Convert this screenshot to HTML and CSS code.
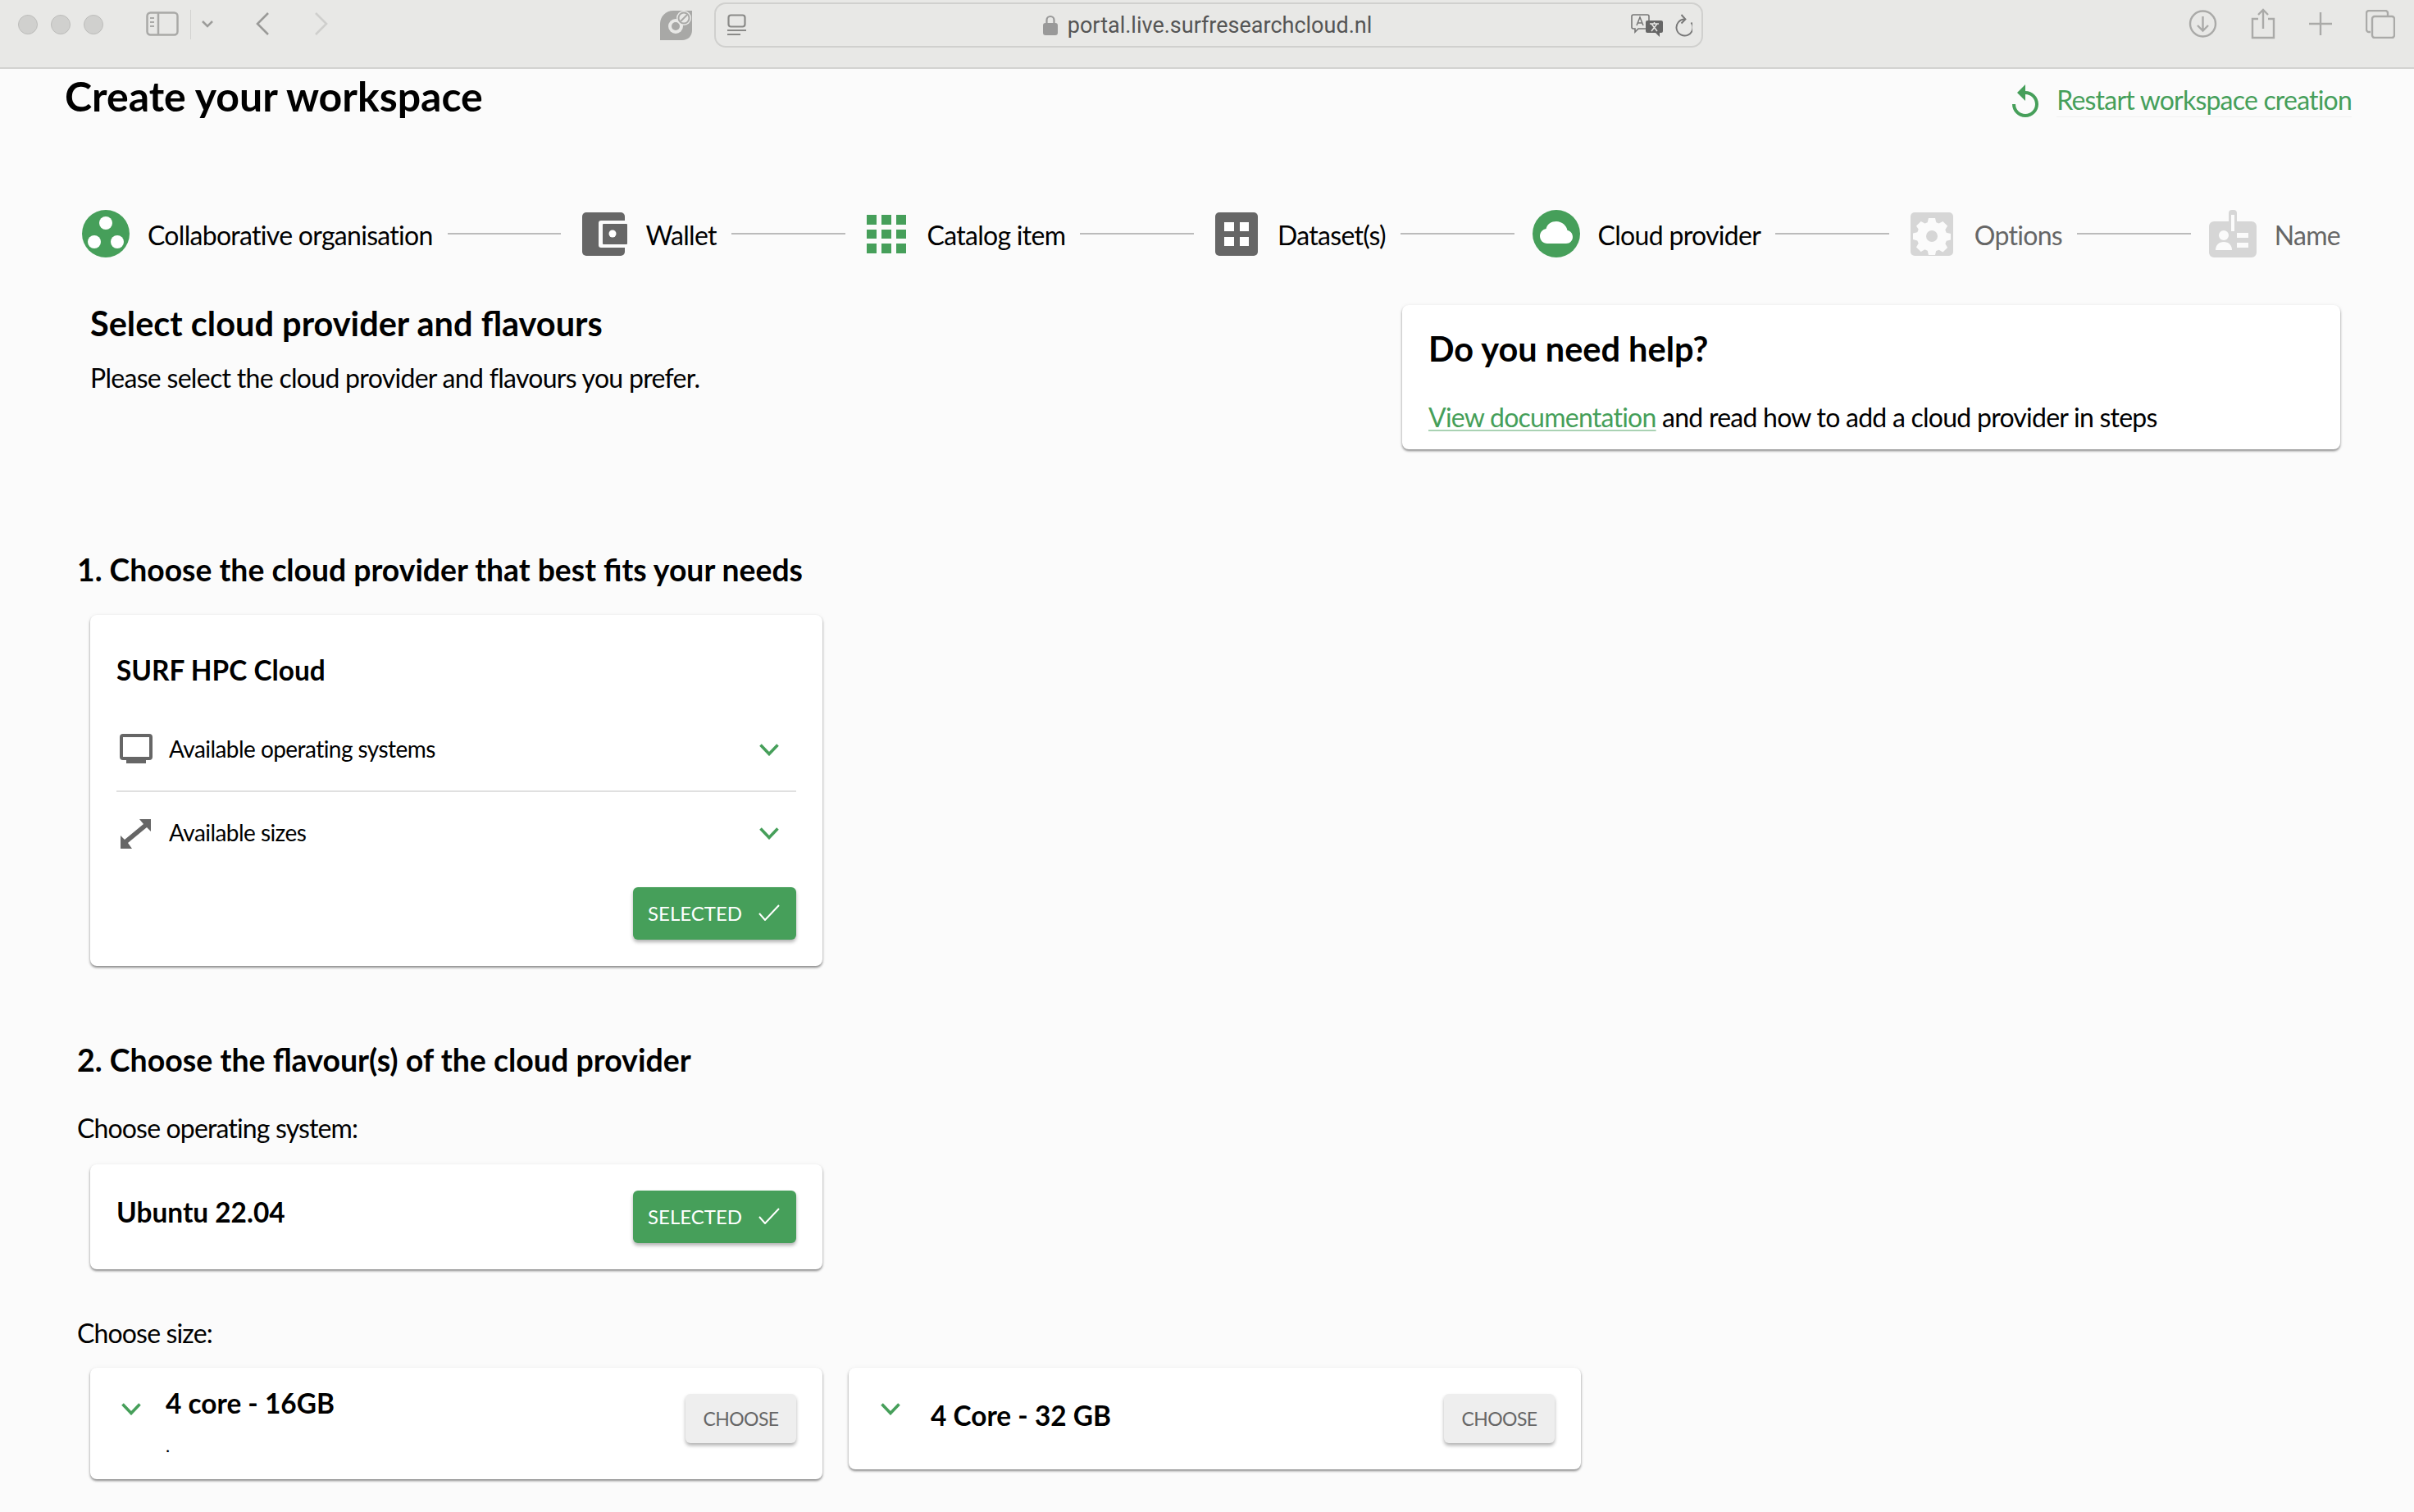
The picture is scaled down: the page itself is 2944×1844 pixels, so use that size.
FILE: index.html
```html
<!DOCTYPE html>
<html lang="en">
<head>
<meta charset="utf-8">
<title>Create your workspace</title>
<link rel="stylesheet" href="styles.css">
</head>
<body>
<header class="chrome">
  <div class="lights"><span class="light"></span><span class="light"></span><span class="light"></span></div>
  <svg class="ci sidebar" width="40" height="30" viewBox="0 0 40 30" fill="none" stroke="#a9a9a7" stroke-width="2.5"><rect x="1.5" y="1.5" width="37" height="27" rx="4"/><path d="M15 2v26"/><path d="M5 8h5M5 13h5M5 18h5" stroke-width="2"/></svg>
  <span class="sep"></span>
  <svg class="ci drop" width="14" height="9" viewBox="0 0 14 9" fill="none" stroke="#9c9c9a" stroke-width="2.5"><path d="M1 1l6 6 6-6"/></svg>
  <svg class="ci back" width="18" height="28" viewBox="0 0 18 28" fill="none" stroke="#9a9a98" stroke-width="2.6"><path d="M16 1L3 14l13 13"/></svg>
  <svg class="ci forward" width="18" height="28" viewBox="0 0 18 28" fill="none" stroke="#cfcfcd" stroke-width="2.6"><path d="M2 1l13 13L2 27"/></svg>
  <svg class="ci logo" width="39" height="38" viewBox="0 0 39 38"><path fill="#a8a8a6" d="M16 2h23v24c0 7-5 12-12 12H0V18C0 9 7 2 16 2z"/><circle cx="19" cy="21" r="9" fill="#e8e8e6"/><circle cx="19" cy="21" r="5" fill="#a8a8a6"/><circle cx="29" cy="11" r="9" fill="#e8e8e6"/><circle cx="29" cy="11" r="6.5" fill="none" stroke="#a8a8a6" stroke-width="2"/><path d="M25 15l8-8" stroke="#a8a8a6" stroke-width="2"/></svg>
  <div class="address">
    <svg width="23" height="27" viewBox="0 0 23 27" fill="none" stroke="#8a8a88" stroke-width="2.2"><rect x="1.5" y="1.5" width="20" height="14" rx="3"/><path d="M0 20h23M0 25h16"/></svg>
    <div class="url">
      <svg width="18" height="25" viewBox="0 0 18 25"><path d="M4.500 11V6.500a4.500 4.500 0 0 1 9 0V11" fill="none" stroke="#999" stroke-width="2.200"/><rect y="10" width="18" height="15" rx="3" fill="#999"/></svg>
      <span>portal.live.surfresearchcloud.nl</span>
    </div>
    <svg width="39" height="28" viewBox="0 0 39 28"><path d="M3 1h17a2 2 0 0 1 2 2v13a2 2 0 0 1-2 2H9l-4 4v-4H3a2 2 0 0 1-2-2V3a2 2 0 0 1 2-2z" fill="#e8e8e6" stroke="#777" stroke-width="1.600"/><path d="M7 14l4-10 4 10M8.500 11h5" fill="none" stroke="#777" stroke-width="1.500"/><path d="M20 8h17a2 2 0 0 1 2 2v11a2 2 0 0 1-2 2h-2v5l-5-5H20a2 2 0 0 1-2-2V10a2 2 0 0 1 2-2z" fill="#666"/><path d="M23 12h11M28.500 10v2M25 21l7-9M32 21l-7-9" fill="none" stroke="#e8e8e6" stroke-width="1.500"/></svg>
    <svg class="reload" width="23" height="28" viewBox="0 0 23 28" fill="none" stroke="#777" stroke-width="1.900"><path d="M13.500 6.500a10 10 0 1 0 8 4"/><path d="M9.500 1l5 5.500-5 5"/></svg>
  </div>
  <div class="actions">
    <svg width="35" height="34" viewBox="0 0 35 34" fill="none" stroke="#aaaaa8" stroke-width="2.400"><circle cx="17.500" cy="17" r="15.500"/><path d="M17.500 8v17M11 19l6.500 6.500L24 19"/></svg>
    <svg width="30" height="38" viewBox="0 0 30 38" fill="none" stroke="#aaaaa8" stroke-width="2.400"><path d="M9 13H2v23h26V13h-7"/><path d="M15 25V2M9 8l6-6 6 6"/></svg>
    <svg width="28" height="28" viewBox="0 0 28 28" fill="none" stroke="#aaaaa8" stroke-width="2.400"><path d="M14 0v28M0 14h28"/></svg>
    <svg width="36" height="35" viewBox="0 0 36 35" fill="none" stroke="#aaaaa8" stroke-width="2.400"><path d="M6 27H4a3 3 0 0 1-3-3V4a3 3 0 0 1 3-3h20a3 3 0 0 1 3 3v3"/><rect x="8" y="8" width="27" height="26" rx="3"/></svg>
  </div>
</header>

<main class="page">
  <div class="head">
    <h1 class="title">Create your workspace</h1>
    <a class="restart" href="#">
      <svg width="32" height="40" viewBox="4 1 16 20" fill="#469f5a"><path d="M12 5V1L7 6l5 5V7c3.310 0 6 2.690 6 6s-2.690 6-6 6-6-2.690-6-6H4c0 4.420 3.580 8 8 8s8-3.580 8-8-3.580-8-8-8z"/></svg>
      <span class="restart-text">Restart workspace creation</span>
    </a>
  </div>

  <nav class="stepper">
    <div class="step s1">
      <svg width="58" height="58" viewBox="0 0 58 58"><circle cx="29" cy="29" r="29" fill="#469f5a"/><circle cx="29" cy="16" r="8" fill="#fff"/><circle cx="15" cy="39" r="8" fill="#fff"/><circle cx="43" cy="39" r="8" fill="#fff"/></svg>
      <span>Collaborative organisation</span>
    </div>
    <span class="line"></span>
    <div class="step s2">
      <svg width="55" height="53" viewBox="0 0 55 53"><rect width="52" height="53" rx="5" fill="#666"/><rect x="20" y="10" width="35" height="33" rx="3" fill="#fbfbfb"/><rect x="25" y="14" width="30" height="25" rx="1" fill="#666"/><circle cx="37" cy="26" r="4.500" fill="#fff"/></svg>
      <span>Wallet</span>
    </div>
    <span class="line"></span>
    <div class="step s3 wide-gap">
      <svg width="48" height="47" viewBox="0 0 48 47" fill="#469f5a"><rect width="12" height="12"/><rect x="18" width="12" height="12"/><rect x="36" width="12" height="12"/><rect y="18" width="12" height="11"/><rect x="18" y="18" width="12" height="11"/><rect x="36" y="18" width="12" height="11"/><rect y="35" width="12" height="12"/><rect x="18" y="35" width="12" height="12"/><rect x="36" y="35" width="12" height="12"/></svg>
      <span>Catalog item</span>
    </div>
    <span class="line"></span>
    <div class="step s4 wide-gap">
      <svg width="52" height="53" viewBox="0 0 52 53"><rect width="52" height="53" rx="5" fill="#666"/><g fill="#fff"><rect x="11" y="12" width="12" height="11"/><rect x="30" y="12" width="11" height="11"/><rect x="11" y="30" width="12" height="11"/><rect x="30" y="30" width="11" height="11"/></g></svg>
      <span>Dataset(s)</span>
    </div>
    <span class="line"></span>
    <div class="step s5">
      <svg width="58" height="58" viewBox="0 0 58 58"><circle cx="29" cy="29" r="29" fill="#469f5a"/><path fill="#fff" d="M18 41c-5 0-9-4-9-9 0-4.500 3.300-8.200 7.500-8.900C18 17 23 14 29 14c7 0 12.500 5 13.500 11 4 .5 6.500 4 6.500 8 0 4.500-3.500 8-8 8z"/></svg>
      <span>Cloud provider</span>
    </div>
    <span class="line"></span>
    <div class="step s6 todo wide-gap">
      <svg width="52" height="53" viewBox="0 0 52 53"><rect width="52" height="53" rx="5" fill="#d6d6d6"/><path fill="#fbfbfb" d="M22 7h8l1.300 5.200 3.300 1.400 4.800-2.700 5.700 5.600-2.800 4.700 1.400 3.500L49 26v7.500l-5.200 1.300-1.400 3.400 2.700 4.700-5.700 5.600-4.700-2.800-3.500 1.400L30 52h-8l-1.300-5.300-3.300-1.400-4.700 2.800L7 42.500l2.700-4.700-1.400-3.400L3 33v-7.500l5.300-1.300 1.400-3.500L7 16.500l5.700-5.600 4.700 2.700 3.300-1.400z"/><circle cx="26" cy="29" r="7" fill="#d6d6d6"/></svg>
      <span>Options</span>
    </div>
    <span class="line"></span>
    <div class="step s7 todo">
      <svg width="58" height="58" viewBox="0 0 58 58"><path fill="#d6d6d6" d="M24 4a4 4 0 0 1 4-4h2a4 4 0 0 1 4 4v10h18a6 6 0 0 1 6 6v32a6 6 0 0 1-6 6H6a6 6 0 0 1-6-6V20a6 6 0 0 1 6-6h18z"/><rect x="27" y="6" width="4" height="20" fill="#fbfbfb"/><circle cx="18" cy="31" r="6" fill="#fbfbfb"/><path fill="#fbfbfb" d="M8 49c0-6 4-10 10-10s10 4 10 10z"/><rect x="34" y="28" width="14" height="6" fill="#fbfbfb"/><rect x="34" y="40" width="14" height="6" fill="#fbfbfb"/></svg>
      <span>Name</span>
    </div>
  </nav>

  <section class="intro">
    <div class="intro-text">
      <h2 class="sub">Select cloud provider and flavours</h2>
      <p class="lead">Please select the cloud provider and flavours you prefer.</p>
    </div>
    <aside class="card help">
      <h2 class="sub help-title">Do you need help?</h2>
      <p class="lead help-line"><a class="doc" href="#">View documentation</a> and read how to add a cloud provider in steps</p>
    </aside>
  </section>

  <section class="block first">
    <h3 class="heading">1. Choose the cloud provider that best fits your needs</h3>
    <div class="card provider">
      <h4 class="card-title">SURF HPC Cloud</h4>
      <div class="row row-os">
        <svg class="row-icon" width="40" height="36" viewBox="0 0 40 36"><path fill="none" stroke="#666" stroke-width="4" d="M4 2h32a2 2 0 0 1 2 2v24a2 2 0 0 1-2 2H4a2 2 0 0 1-2-2V4a2 2 0 0 1 2-2z"/><rect x="8" y="30" width="24" height="6" fill="#666"/></svg>
        <span class="row-label">Available operating systems</span>
        <svg class="chev" width="24" height="15" viewBox="0 0 24 15" fill="none" stroke="#469f5a" stroke-width="3.600"><path d="M1.500 1.500L12 12.500 22.500 1.500"/></svg>
      </div>
      <div class="row row-size">
        <svg class="row-icon" width="40" height="36" viewBox="0 0 40 36" fill="#666"><path d="M38 0v15l-5-5L10 29l5 7H1V20l5 5L29 6l-5-6z"/></svg>
        <span class="row-label">Available sizes</span>
        <svg class="chev" width="24" height="15" viewBox="0 0 24 15" fill="none" stroke="#469f5a" stroke-width="3.600"><path d="M1.500 1.500L12 12.500 22.500 1.500"/></svg>
      </div>
      <div class="foot">
        <button class="btn selected" type="button">SELECTED<svg width="26" height="20" viewBox="0 0 26 20" fill="none" stroke="#fff" stroke-width="2"><path d="M1 11l7 8L25 1"/></svg></button>
      </div>
    </div>
  </section>

  <section class="block second">
    <h3 class="heading">2. Choose the flavour(s) of the cloud provider</h3>
    <p class="label os-label">Choose operating system:</p>
    <div class="card os">
      <h4 class="card-title os-title">Ubuntu 22.04</h4>
      <button class="btn selected" type="button">SELECTED<svg width="26" height="20" viewBox="0 0 26 20" fill="none" stroke="#fff" stroke-width="2"><path d="M1 11l7 8L25 1"/></svg></button>
    </div>
    <p class="label size-label">Choose size:</p>
    <div class="sizes">
      <div class="card size tall">
        <svg class="chev size-chev" width="24" height="15" viewBox="0 0 24 15" fill="none" stroke="#469f5a" stroke-width="3.600"><path d="M1.500 1.500L12 12.500 22.500 1.500"/></svg>
        <div class="size-body">
          <h4 class="card-title size-title">4 core - 16GB</h4>
          <p class="dot">.</p>
        </div>
        <button class="btn choose" type="button">CHOOSE</button>
      </div>
      <div class="card size short">
        <svg class="chev size-chev" width="24" height="15" viewBox="0 0 24 15" fill="none" stroke="#469f5a" stroke-width="3.600"><path d="M1.500 1.500L12 12.500 22.500 1.500"/></svg>
        <div class="size-body">
          <h4 class="card-title size-title wide">4 Core - 32 GB</h4>
        </div>
        <button class="btn choose" type="button">CHOOSE</button>
      </div>
    </div>
  </section>
</main>
</body>
</html>
```
FILE: styles.css
```css
* { box-sizing: border-box; }
html, body { margin: 0; height: 100%; overflow: hidden; }
body { background: #fbfbfb; color: #000; font-family: "Lato", "Open Sans", sans-serif; font-size: 32px; }
h1, h2, h3, h4, p { margin: 0; }
a { text-decoration: none; }

/* browser chrome */
.chrome { height: 84px; background: #e8e8e6; border-bottom: 2px solid #d2d2d0; display: flex; align-items: flex-start; padding-left: 22px; position: relative; }
.lights { display: flex; gap: 16px; margin-top: 18px; }
.light { width: 24px; height: 24px; border-radius: 50%; background: #d0d0ce; border: 1px solid #bdbdbb; }
.ci { flex: none; }
.sidebar { margin: 14px 0 0 52px; }
.sep { width: 1px; height: 36px; background: #d2d2d0; margin: 12px 0 0 14px; }
.drop { margin: 25px 0 0 13px; }
.back { margin: 15px 0 0 51px; }
.forward { margin: 15px 0 0 54px; }
.logo { margin: 11px 0 0 404px; }
.address { width: 1206px; height: 55px; margin: 3px 0 0 27px; border: 2px solid #d0d0ce; border-radius: 14px; display: flex; align-items: center; padding: 0 11px 0 14px; }
.url { flex: 1; display: flex; align-items: center; justify-content: center; gap: 12px; color: #555; font-family: "Roboto", sans-serif; font-size: 27px; padding-left: 46px; }
.reload { margin-left: 13px; }
.actions { display: flex; align-items: center; margin: 10px 0 0 592px; gap: 41px; height: 38px; }

/* page head */
.head { display: flex; justify-content: space-between; align-items: flex-start; padding: 0 76px 0 79px; height: 172px; }
.title { font-size: 50px; font-weight: 700; line-height: 66px; }
.restart { display: flex; align-items: center; gap: 22px; color: #469f5a; margin-top: 18px; }
.restart-text { font-size: 32px; line-height: 40px; letter-spacing: -0.8px; border-bottom: 1px solid #f0f0f0; }

/* stepper */
.stepper { display: flex; align-items: center; height: 58px; padding: 0 90px 0 100px; letter-spacing: -0.7px; }
.step { display: flex; align-items: center; gap: 22px; flex: none; white-space: nowrap; }
.step.wide-gap { gap: 26px; }
.step.s4 { gap: 24px; }
.s2 svg, .wide-gap svg { margin-left: 4px; }
.step span { padding-top: 3px; }
.step.todo { color: #666; }
.line { flex: 1; height: 2px; background: #bbb; margin: 0 22px 0 18px; }

/* intro */
.intro { display: flex; justify-content: space-between; align-items: flex-start; padding: 0 90px 0 110px; margin-top: 58px; }
.sub { font-size: 41.500px; font-weight: 700; line-height: 44px; }
.lead { font-size: 32px; line-height: 40px; margin-top: 25px; letter-spacing: -0.7px; }
.card { background: #fff; border-radius: 8px; box-shadow: 0 2px 3px rgba(0,0,0,.45), 0 0 6px rgba(0,0,0,.04); }
.help { width: 1144px; height: 176px; padding: 31px 32px 0; }
.help-title { line-height: 44px; }
.help-line { margin-top: 42px; letter-spacing: -0.75px; }
.doc { color: #469f5a; text-decoration: underline; text-decoration-color: #a9d2b3; text-decoration-thickness: 2px; text-underline-offset: 3px; }

/* blocks */
.block { padding-left: 94px; }
.first { margin-top: 123px; }
.first .heading { font-size: 37.300px; }
.second { margin-top: 91px; }
.heading { font-size: 37.500px; font-weight: 700; line-height: 48px; }
.provider { width: 893px; height: 428px; margin: 31px 0 0 16px; padding: 43px 32px 32px; }
.card-title { font-size: 33.400px; font-weight: 700; line-height: 48px; }
.row { display: flex; align-items: center; }
.row-os { height: 105px; margin-top: 20px; border-bottom: 2px solid #e0e0e0; }
.row-size { height: 101px; }
.row-icon { margin-left: 4px; flex: none; }
.row-label { flex: 1; font-size: 28px; margin-left: 20px; letter-spacing: -0.55px; }
.row-size .row-label { padding-bottom: 3px; }
.chev { flex: none; }
.row-os .chev { margin: 4px 21px 0 0; }
.row-size .chev { margin-right: 21px; }
.foot { display: flex; justify-content: flex-end; margin-top: 15px; }
.btn { border: 0; border-radius: 6px; height: 64px; font-family: inherit; display: flex; align-items: center; flex: none; }
.selected { width: 199px; gap: 20px; padding: 0 0 2px 18px; background: #469f5a; color: #fff; font-size: 24px; box-shadow: 0 3px 4px rgba(0,0,0,.3); }
.choose { width: 135px; height: 60px; justify-content: center; background: #eee; color: #666; font-size: 23px; letter-spacing: -0.6px; box-shadow: 0 3px 4px rgba(0,0,0,.3); }
.label { font-size: 32px; line-height: 48px; letter-spacing: -0.85px; }
.os-label { margin-top: 35px; }
.os { width: 893px; height: 128px; margin: 20px 0 0 16px; padding: 32px; display: flex; justify-content: space-between; align-items: flex-start; }
.os-title { line-height: 52px; }
.size-label { margin-top: 54px; }
.sizes { display: flex; gap: 32px; margin: 18px 0 0 16px; align-items: flex-start; }
.size { width: 893px; padding: 32px; display: flex; align-items: flex-start; }
.tall { height: 136px; }
.short { height: 124px; padding-left: 39px; }
.size-chev { margin-top: 11px; }
.tall .size-chev { margin: 11px 0 0 6px; }
.size-body { flex: 1; margin-left: 30px; }
.short .size-body { margin-left: 37px; }
.size-title { line-height: 48px; margin-top: -13px; }
.size-title.wide { margin-top: 2px; }
.dot { font-size: 22px; line-height: 30px; margin-top: 13px; }
```
